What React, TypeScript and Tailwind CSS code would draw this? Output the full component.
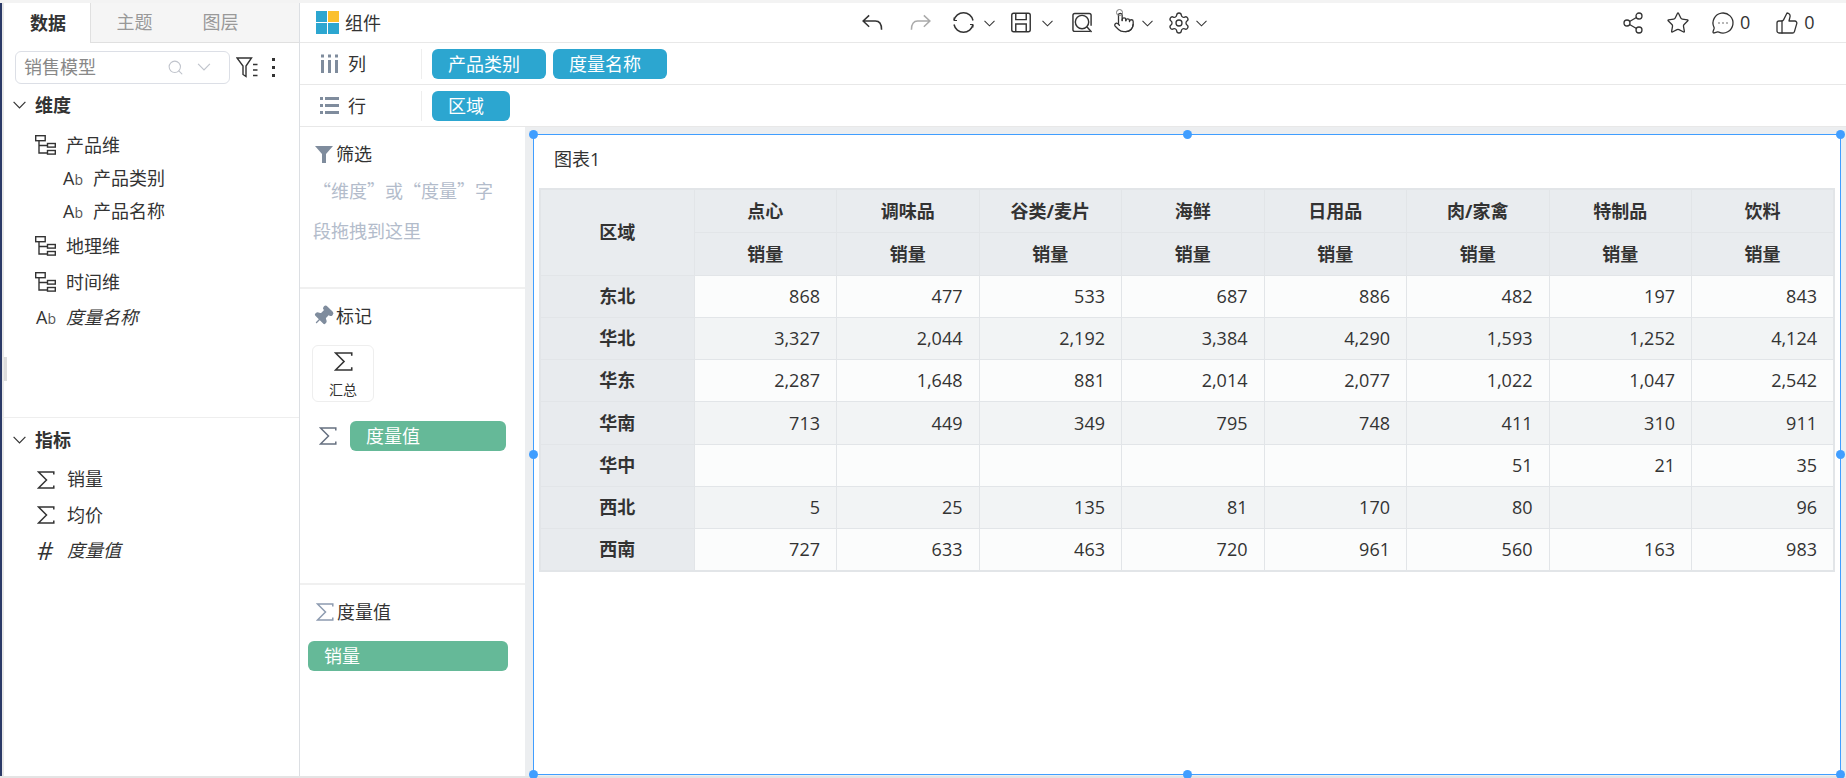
import { Pin, Pointer, Search, Settings, Share2, Star, MessageCircleMore, ThumbsUp } from "lucide-react";

const categories = ["点心", "调味品", "谷类/麦片", "海鲜", "日用品", "肉/家禽", "特制品", "饮料"];

const rows: { region: string; values: string[] }[] = [
  { region: "东北", values: ["868", "477", "533", "687", "886", "482", "197", "843"] },
  { region: "华北", values: ["3,327", "2,044", "2,192", "3,384", "4,290", "1,593", "1,252", "4,124"] },
  { region: "华东", values: ["2,287", "1,648", "881", "2,014", "2,077", "1,022", "1,047", "2,542"] },
  { region: "华南", values: ["713", "449", "349", "795", "748", "411", "310", "911"] },
  { region: "华中", values: ["", "", "", "", "", "51", "21", "35"] },
  { region: "西北", values: ["5", "25", "135", "81", "170", "80", "", "96"] },
  { region: "西南", values: ["727", "633", "463", "720", "961", "560", "163", "983"] },
];

function Sigma({ className }: { className?: string }) {
  return (
    <svg viewBox="0 0 18 18" fill="none" className={className}>
      <path d="M16.8 3.5V1H1.5L9.5 9L1.5 17H16.8V14.5" stroke="currentColor" strokeWidth="1.5" />
    </svg>
  );
}

function TreeIcon() {
  return (
    <svg viewBox="0 0 21 20" fill="none" stroke="#333" strokeWidth="1.4" className="h-5 w-[21px] shrink-0">
      <rect x="0.7" y="0.7" width="9.5" height="5" />
      <path d="M4 6V18H12M4 10.5H12" />
      <rect x="12.5" y="8.5" width="7.8" height="3.6" />
      <rect x="12.5" y="15.5" width="7.8" height="3.6" />
    </svg>
  );
}

function AbIcon() {
  return (
    <span className="w-[18px] shrink-0 whitespace-nowrap text-[#333]">
      <span className="text-[18px]">A</span>
      <span className="text-[14px] text-[#555]">b</span>
    </span>
  );
}

function Chevron({ className, color = "#333" }: { className: string; color?: string }) {
  return (
    <svg viewBox="0 0 13 8" fill="none" stroke={color} strokeWidth="1.2" className={className}>
      <path d="M0.6 0.8L6.5 6.8L12.4 0.8" />
    </svg>
  );
}

function TreeRow({ children, label, indent, height, italic }: {
  children: React.ReactNode;
  label: string;
  indent: string;
  height: string;
  italic?: boolean;
}) {
  return (
    <div className={`flex items-center ${indent} ${height}`}>
      {children}
      <span className={`text-[#333] ${italic ? "italic" : ""}`}>{label}</span>
    </div>
  );
}

function Sidebar() {
  return (
    <aside className="relative flex w-[296px] shrink-0 flex-col border-r border-[#dcdfe3] bg-white">
      <div className="flex h-[40px] border-b border-[#e0e0e0] bg-[#f5f5f5] text-[#999]">
        <div className="-mb-px flex w-[87px] items-center justify-center border-r border-[#e0e0e0] bg-white pl-[2px] font-bold text-[#333]">数据</div>
        <div className="flex w-[85px] items-center justify-center pl-[2px]">主题</div>
        <div className="flex w-[87px] items-center justify-center pl-[2px]">图层</div>
      </div>

      <div className="flex h-[48px] items-center pl-[11px]">
        <div className="flex h-[33px] w-[215px] items-center rounded-md border border-[#dcdfe6] pl-[8px] text-[#888]">
          <span>销售模型</span>
          <Search className="ml-[71px] h-[17px] w-[17px] text-[#c0c4cc]" strokeWidth={1.5} />
          <Chevron className="ml-[13px] h-[8px] w-[14px]" color="#c0c4cc" />
        </div>
        <svg viewBox="0 0 22 21" fill="none" stroke="#333" strokeWidth="1.4" className="ml-[6px] h-[21px] w-[22px]">
          <path d="M1 1H15.5L10 9V19.5L7 17.5V9Z" />
          <path d="M17 7.5H21.5M17 13H21.5M17 18.5H21.5" />
        </svg>
        <div className="ml-[14px] flex flex-col gap-[5px]">
          <span className="h-[3px] w-[3px] bg-[#333]" />
          <span className="h-[3px] w-[3px] bg-[#333]" />
          <span className="h-[3px] w-[3px] bg-[#333]" />
        </div>
      </div>

      <div className="h-[327px] border-b border-[#eeeeee]">
        <div className="flex h-[28px] items-center pl-[9px]">
          <Chevron className="h-[8px] w-[13px]" />
          <span className="ml-[9px] font-bold text-[#333]">维度</span>
        </div>
        <div className="mt-[9px]">
          <TreeRow label="产品维" indent="pl-[31px] gap-[10px]" height="h-[34px]"><TreeIcon /></TreeRow>
          <TreeRow label="产品类别" indent="pl-[59px] gap-[12px]" height="h-[32px]"><AbIcon /></TreeRow>
          <TreeRow label="产品名称" indent="pl-[59px] gap-[12px]" height="h-[34px]"><AbIcon /></TreeRow>
          <TreeRow label="地理维" indent="pl-[31px] gap-[10px]" height="h-[36px]"><TreeIcon /></TreeRow>
          <TreeRow label="时间维" indent="pl-[31px] gap-[10px]" height="h-[36px]"><TreeIcon /></TreeRow>
          <TreeRow label="度量名称" indent="pl-[32px] gap-[12px]" height="h-[35px]" italic><AbIcon /></TreeRow>
        </div>
      </div>

      <div className="flex h-[44px] items-center pl-[9px]">
        <Chevron className="h-[8px] w-[13px]" />
        <span className="ml-[9px] font-bold text-[#333]">指标</span>
      </div>
      <TreeRow label="销量" indent="pl-[33px] gap-[12px]" height="h-[35px]"><Sigma className="h-[18px] w-[18px] text-[#333]" /></TreeRow>
      <TreeRow label="均价" indent="pl-[33px] gap-[12px]" height="h-[36px]"><Sigma className="h-[18px] w-[18px] text-[#333]" /></TreeRow>
      <TreeRow label="度量值" indent="pl-[33px] gap-[12px]" height="h-[34px]" italic>
        <span className="w-[18px] text-[25px] italic leading-none text-[#333]">#</span>
      </TreeRow>

      <div className="absolute left-0 top-[354px] h-[24px] w-[3px] bg-[#dddddd]" />
    </aside>
  );
}

function Toolbar() {
  return (
    <div className="flex h-[40px] items-center border-b border-[#e8e8e8] pl-[16px]">
      <div className="grid h-[23px] w-[23px] grid-cols-2 gap-px">
        <span className="bg-[#2ca6d0]" />
        <span className="bg-[#fbc02d]" />
        <span className="bg-[#2ca6d0]" />
        <span className="bg-[#2ca6d0]" />
      </div>
      <span className="ml-[6px] pt-px text-[#333]">组件</span>

      <svg viewBox="0 0 22 17" fill="none" stroke="#333" strokeWidth="1.6" className="ml-[481px] h-[17px] w-[21px]">
        <path d="M7.5 1L1.2 7L7.5 13M1.2 7H14C18 7 20.5 10 20.5 16" />
      </svg>
      <svg viewBox="0 0 22 17" fill="none" stroke="#aaaaaa" strokeWidth="1.6" className="ml-[27px] h-[17px] w-[21px]">
        <path d="M14.5 1L20.8 7L14.5 13M20.8 7H8C4 7 1.5 10 1.5 16" />
      </svg>
      <svg viewBox="0 0 21 21" fill="none" stroke="#333" strokeWidth="1.5" className="ml-[22px] h-[21px] w-[21px]">
        <path d="M1 8.5A9.7 9.7 0 0 1 20 8.5M20 12.5A9.7 9.7 0 0 1 1 12.5" />
        <path d="M1 5.5V8.5H4M20 15.5V12.5H17" strokeWidth="1" />
      </svg>
      <Chevron className="ml-[10px] mt-[2px] h-[7px] w-[11px]" />
      <svg viewBox="0 0 21 21" fill="none" stroke="#333" strokeWidth="1.5" className="ml-[16px] h-[21px] w-[20px]">
        <rect x="0.8" y="0.8" width="19.4" height="19.4" rx="2" />
        <path d="M5 1V7.5H16V1M5 20V12H16V20" />
      </svg>
      <Chevron className="ml-[11px] mt-[2px] h-[7px] w-[11px]" />
      <svg viewBox="0 0 22 21" fill="none" stroke="#333" strokeWidth="1.5" className="ml-[19px] h-[21px] w-[21px]">
        <path d="M19 19.8H3Q1 19.8 1 18V3Q1 1 3 1H18Q20 1 20 3V14" />
        <circle cx="10.5" cy="10" r="7" />
        <path d="M15.5 15L20.5 20.5" />
      </svg>
      <div className="relative ml-[20px] h-[23px] w-[22px]">
        <Pointer className="h-[23px] w-[22px] text-[#333]" strokeWidth={1.4} />
        <span className="absolute left-[3px] top-[-2px] h-[7px] w-[7px] rounded-full border border-[#777]" />
      </div>
      <Chevron className="ml-[7px] mt-[2px] h-[7px] w-[11px]" />
      <Settings className="ml-[14px] h-6 w-6 text-[#333]" strokeWidth={1.3} />
      <Chevron className="ml-[5px] mt-[2px] h-[7px] w-[11px]" />

      <Share2 className="ml-[414px] h-6 w-6 text-[#333]" strokeWidth={1.3} />
      <Star className="ml-[21px] h-6 w-6 text-[#333]" strokeWidth={1.3} />
      <MessageCircleMore className="ml-[21px] h-6 w-6 text-[#333]" strokeWidth={1.3} />
      <span className="ml-[5px] text-[#333]">0</span>
      <ThumbsUp className="ml-[25px] h-6 w-6 text-[#333]" strokeWidth={1.3} />
      <span className="ml-[5px] text-[#333]">0</span>
    </div>
  );
}

function ShelfRow({ icon, label, pills, pillWidths }: {
  icon: React.ReactNode;
  label: string;
  pills: string[];
  pillWidths: string[];
}) {
  return (
    <div className="flex h-[42px] items-center border-b border-[#e8e8e8]">
      <div className="flex h-[30px] w-[122px] items-center gap-[9px] border-r border-[#eeeeee] pl-[20px] text-[#333]">
        {icon}
        <span className="pt-[2px]">{label}</span>
      </div>
      <div className="ml-[10px] mt-px flex gap-[7px]">
        {pills.map((p, i) => (
          <div key={p} className={`flex h-[30px] items-center rounded-md bg-[#2ca6d0] pl-[16px] pt-px text-white ${pillWidths[i]}`}>
            {p}
          </div>
        ))}
      </div>
    </div>
  );
}

function MiddlePanel() {
  return (
    <div className="flex w-[225px] shrink-0 flex-col bg-white">
      <div className="h-[162px] border-b-2 border-[#f0f0f0] pl-[13px] pt-[15px]">
        <div className="flex h-[24px] items-center gap-[3px] pl-[2px] text-[#333]">
          <svg viewBox="0 0 18 18" className="h-[18px] w-[18px]" fill="#7f8c9d">
            <path d="M0 1H18L11 9V18H7V9Z" />
          </svg>
          筛选
        </div>
        <p className="mt-[4px] w-[190px] text-[18px] leading-[40px] text-[#b3bccb] font-['Noto_Sans_CJK_SC',sans-serif]">“维度”或“度量”字段拖拽到这里</p>
      </div>
      <div className="h-[296px] border-b-2 border-[#f0f0f0] pl-[12px] pt-[15px]">
        <div className="flex h-[24px] items-center gap-[2px] text-[#333]">
          <Pin className="h-[22px] w-[22px] rotate-45 fill-[#7f8c9d] text-[#7f8c9d]" strokeWidth={1.5} />
          标记
        </div>
        <div className="mt-[17px] flex h-[57px] w-[62px] flex-col items-center rounded-md border border-[#eeeeee] pt-[6px] text-[14px] leading-[20px] text-[#333]">
          <Sigma className="h-[19px] w-[19px] text-[#333]" />
          <span className="mt-[9px]">汇总</span>
        </div>
        <div className="mt-[19px] flex items-center">
          <Sigma className="ml-[7px] h-[18px] w-[18px] text-[#667080]" />
          <div className="ml-[13px] flex h-[30px] w-[156px] items-center rounded-md bg-[#65b998] pl-[16px] pt-px text-white">度量值</div>
        </div>
      </div>
      <div className="pl-[8px] pt-[15px]">
        <div className="flex h-[24px] items-center gap-[3px] pl-[8px] text-[#333]">
          <Sigma className="h-[18px] w-[18px] text-[#8d9bb0]" />
          度量值
        </div>
        <div className="mt-[17px] flex h-[30px] w-[200px] items-center rounded-md bg-[#65b998] pl-[16px] pt-px text-white">销量</div>
      </div>
    </div>
  );
}

function DataTable() {
  const border = "border border-[#e2e5e8]";
  return (
    <table className="w-[1294px] table-fixed border-collapse border-2 border-[#e2e5e8] text-[#333]">
      <colgroup>
        <col className="w-[154px]" />
        {categories.map((c) => (
          <col key={c} className="w-[142.5px]" />
        ))}
      </colgroup>
      <thead>
        <tr className="h-[43px] bg-[#e9ecef]">
          <th rowSpan={2} className={`${border} font-bold`}>区域</th>
          {categories.map((c) => (
            <th key={c} className={`${border} pt-px font-bold`}>{c}</th>
          ))}
        </tr>
        <tr className="h-[43px] bg-[#e9ecef]">
          {categories.map((c) => (
            <th key={c} className={`${border} pt-px font-bold`}>销量</th>
          ))}
        </tr>
      </thead>
      <tbody>
        {rows.map((r, i) => (
          <tr key={r.region} className={`h-[42.3px] ${i % 2 === 0 ? "bg-[#fbfcfc]" : "bg-[#f2f4f5]"}`}>
            <td className={`${border} bg-[#e8ebee] text-center font-bold`}>{r.region}</td>
            {r.values.map((v, j) => (
              <td key={j} className={`${border} pr-4 text-right`}>{v}</td>
            ))}
          </tr>
        ))}
      </tbody>
    </table>
  );
}

function Handle({ className }: { className: string }) {
  return <span className={`absolute h-[9px] w-[9px] rounded-full bg-[#409eff] ${className}`} />;
}

function Canvas() {
  return (
    <div className="flex-1 bg-[#eceef0] pb-[1px] pl-[8px] pr-[5px] pt-[7px]">
      <div className="relative h-full border border-[#409eff] bg-white">
        <div className="flex h-[53px] items-center pb-[4px] pl-[20px] text-[#333]">图表1</div>
        <div className="pl-[5px]">
          <DataTable />
        </div>
        <Handle className="-left-[5px] -top-[5px]" />
        <Handle className="left-1/2 -top-[5px] -ml-[4px]" />
        <Handle className="-right-[5px] -top-[5px]" />
        <Handle className="-left-[5px] top-1/2 -mt-[5px]" />
        <Handle className="-right-[5px] top-1/2 -mt-[5px]" />
        <Handle className="-left-[5px] -bottom-[5px]" />
        <Handle className="left-1/2 -bottom-[5px] -ml-[4px]" />
        <Handle className="-right-[5px] -bottom-[5px]" />
      </div>
    </div>
  );
}

export default function App() {
  return (
    <div className="flex h-[778px] w-[1846px] flex-col overflow-hidden bg-white text-[18px] font-['Open_Sans','Noto_Sans_CJK_SC',sans-serif]">
      <div className="h-[3px] shrink-0 bg-[#f3f3f3]" />
      <div className="flex min-h-0 flex-1">
        <div className="w-[2px] shrink-0 bg-[#2b3a67]" />
        <div className="w-[2px] shrink-0 bg-[#e8e8e8]" />
        <Sidebar />
        <div className="flex min-w-0 flex-1 flex-col">
          <Toolbar />
          <ShelfRow
            label="列"
            icon={
              <svg viewBox="0 0 19 19" className="h-[19px] w-[19px]" fill="#7f8c9d">
                <path d="M1 0.5h3v3h-3zM8 0.5h3v3h-3zM15 0.5h3v3h-3zM1 6h3v13h-3zM8 6h3v13h-3zM15 6h3v13h-3z" />
              </svg>
            }
            pills={["产品类别", "度量名称"]}
            pillWidths={["w-[114px]", "w-[114px]"]}
          />
          <ShelfRow
            label="行"
            icon={
              <svg viewBox="0 0 19 19" className="h-[19px] w-[19px]" fill="#7f8c9d">
                <path d="M0 1h3v3h-3zM5 1h14v3h-14zM0 8h3v3h-3zM5 8h14v3h-14zM0 15h3v3h-3zM5 15h14v3h-14z" />
              </svg>
            }
            pills={["区域"]}
            pillWidths={["w-[78px]"]}
          />
          <div className="flex min-h-0 flex-1">
            <MiddlePanel />
            <Canvas />
          </div>
        </div>
      </div>
      <div className="h-[2px] shrink-0 bg-[#e4e4e4]" />
    </div>
  );
}
